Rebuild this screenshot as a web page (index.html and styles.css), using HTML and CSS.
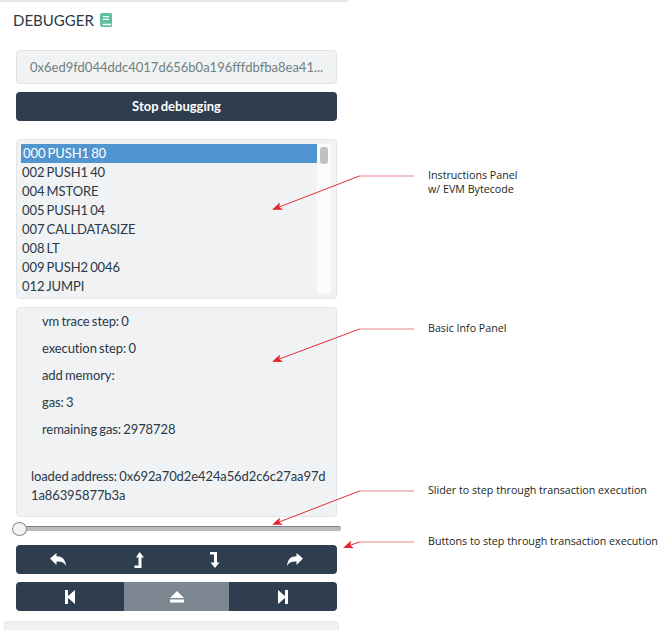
FILE: index.html
```html
<!DOCTYPE html>
<html lang="en">
<head>
<meta charset="utf-8">
<title>Debugger</title>
<link rel="stylesheet" href="styles.css">
</head>
<body>
<div class="page">
  <aside class="sidebar">
    <header class="title">
      <span>DEBUGGER</span>
      <svg class="book" viewBox="0 0 12 14" width="12" height="14"><path fill="#5dc0a1" d="M2 0h8.500a1.500 1.500 0 0 1 1.500 1.500v11a1.500 1.500 0 0 1-1.500 1.500h-8.500a2 2 0 0 1-2-2v-10a2 2 0 0 1 2-2z"/><path fill="#fff" d="M3 3h6v1.300h-6zM3 5.700h6v1.300h-6zM2.500 10.800h8.500v1.400h-8.500z"/></svg>
    </header>
    <div class="content">
      <div class="hash">0x6ed9fd044ddc4017d656b0a196fffdbfba8ea41...</div>
      <button class="stop">Stop debugging</button>
      <div class="panel list-panel">
        <div class="rows">
          <div class="row selected">000 PUSH1 80</div>
          <div class="row">002 PUSH1 40</div>
          <div class="row">004 MSTORE</div>
          <div class="row">005 PUSH1 04</div>
          <div class="row">007 CALLDATASIZE</div>
          <div class="row">008 LT</div>
          <div class="row">009 PUSH2 0046</div>
          <div class="row">012 JUMPI</div>
        </div>
        <div class="track"><div class="thumb"></div></div>
      </div>
      <div class="panel info-panel">
        <ul class="facts">
          <li>vm trace step: 0</li>
          <li>execution step: 0</li>
          <li>add memory:</li>
          <li>gas: 3</li>
          <li>remaining gas: 2978728</li>
        </ul>
        <p class="address">loaded address: 0x692a70d2e424a56d2c6c27aa97d1a86395877b3a</p>
      </div>
      <div class="slider"><div class="knob"></div></div>
      <div class="controls four">
        <button><svg viewBox="0 0 16 14" width="16" height="14"><path d="M0 5.500 6.500 0v3.200c5.500 0 9 3 9.500 9.800-1.700-3.400-4.500-4.800-9.500-4.500v3.500z"/></svg></button>
        <button><svg viewBox="0 0 10 16" width="10" height="16"><path d="M5.500 0 10 5.500h-2.500v10.500h-7v-2.500h4v-8h-2.500z"/></svg></button>
        <button><svg viewBox="0 0 10 16" width="10" height="16"><path d="M0 0h7v10.500h2.500l-4.500 5.500-4.500-5.500h3.500v-8h-4.500z"/></svg></button>
        <button><svg viewBox="0 0 16 14" width="16" height="14"><path d="M16 5.500 9.500 0v3.200c-5.500 0-9 3-9.500 9.800 1.700-3.400 4.500-4.800 9.500-4.500v3.500z"/></svg></button>
      </div>
      <div class="controls three">
        <button><svg viewBox="0 0 10 14" width="10" height="14"><path d="M0 0h3v6l7-6v14l-7-6v6h-3z"/></svg></button>
        <button class="active"><svg viewBox="0 0 14 12" width="14" height="12"><path d="M7 0l7 7h-14zM0 8.500h14v3h-14z"/></svg></button>
        <button><svg viewBox="0 0 10 14" width="10" height="14"><path d="M10 0h-3v6l-7-6v14l7-6v6h3z"/></svg></button>
      </div>
    </div>
    <div class="next-panel"></div>
  </aside>
  <svg class="arrows" viewBox="0 0 659 630" width="659" height="630">
    <defs>
      <marker id="head" markerWidth="10" markerHeight="8" refX="8" refY="4" orient="auto" markerUnits="userSpaceOnUse"><path d="M10 4 0 0 2.500 4 0 8z" fill="#e8202d"/></marker>
    </defs>
    <g class="lines">
      <path d="M359.500 176 274 209" marker-end="url(#head)"/>
      <path d="M359.500 329 274 361" marker-end="url(#head)"/>
      <path d="M359.500 491 274 524" marker-end="url(#head)"/>
      <path d="M359.500 542 345 547" marker-end="url(#head)"/>
    </g>
    <g class="stems">
      <path d="M359 176h55M359 329h55M359 491h55M359 542h55"/>
    </g>
  </svg>
  <p class="note n1">Instructions Panel<br>w/ EVM Bytecode</p>
  <p class="note n2">Basic Info Panel</p>
  <p class="note n3">Slider to step through transaction execution</p>
  <p class="note n4">Buttons to step through transaction execution</p>
</div>
</body>
</html>
```
FILE: styles.css
```css
* { box-sizing: border-box; }
html, body { margin: 0; padding: 0; background: #fff; }
body { font-family: Lato, "Liberation Sans", sans-serif; color: #2d3c4b; overflow: hidden; }
.page { position: relative; width: 659px; height: 630px; overflow: hidden; }
.sidebar { width: 348px; height: 630px; border-top: 2px solid #e4e6e8; display: flex; flex-direction: column; }
.sidebar > * { flex-shrink: 0; }
.title { display: flex; align-items: center; gap: 6px; height: 36px; padding-left: 13px; font-size: 15px; color: #2b3845; }
.content { padding: 12px 11px 0 16px; display: flex; flex-direction: column; }
.hash { height: 34px; line-height: 32px; background: #f0f2f4; border: 1px solid #dfe3e6; border-radius: 4px; padding-left: 13px; font-size: 13px; color: #6f8080; white-space: nowrap; }
.stop { height: 29px; margin-top: 8px; background: #2f3e4f; border: 0; border-radius: 4px; color: #fff; font: 700 13px Lato, sans-serif; word-spacing: -1px; padding: 0 0 2px; }
.panel { background: #f0f2f4; border: 1px solid #e2e6e9; border-radius: 4px; }
.list-panel { height: 160px; margin-top: 18px; padding: 4px 5px 4px 4px; display: flex; }
.rows { flex: 1; height: 150px; overflow: hidden; }
.row { height: 19px; line-height: 19px; font-size: 13px; letter-spacing: -0.100px; word-spacing: -1px; padding-left: 1px; color: #2b3845; white-space: nowrap; }
.row.selected { background: #5095cf; color: #fff; padding-left: 2px; }
.track { width: 14px; height: 150px; background: #fbfbfb; padding: 3px 2px 0 3px; }
.thumb { width: 8px; height: 17px; background: #bfc1c3; border-radius: 3px; }
.info-panel { height: 210px; margin-top: 8px; padding: 0 7px 0 14px; font-size: 13px; letter-spacing: -0.100px; word-spacing: -1px; color: #2b3845; }
.facts { list-style: none; margin: 0; padding: 0 0 0 11px; }
.facts li { height: 27px; line-height: 27px; }
.address { margin: 24px 0 0 0; line-height: 19px; word-break: break-all; }
.slider { position: relative; width: 326px; height: 5px; margin: 9px 0 0 -1px; background: #b9babb; border-top: 1px solid #7d7e80; border-radius: 3px; }
.knob { position: absolute; left: -3px; top: -5px; width: 15px; height: 14px; border-radius: 50%; background: #f4f4f4; border: 1px solid #8b8d8f; }
.controls { height: 29px; background: #2f3e4f; border-radius: 4px; overflow: hidden; }
.controls.four { margin-top: 14px; display: grid; grid-template-columns: 84px 78px 74px 85px; }
.controls.three { margin-top: 8px; display: grid; grid-template-columns: 108px 105px 108px; }
.controls button { border: 0; background: none; padding: 0; display: flex; align-items: center; justify-content: center; }
.controls svg { fill: #fff; display: block; }
.three button.active { background: #7c8791; }
.next-panel { height: 30px; margin: 10px 9px 0 4px; background: #f0f2f4; border: 1px solid #e2e6e9; border-radius: 4px; }
.arrows { position: absolute; left: 0; top: 0; pointer-events: none; }
.lines path { fill: none; stroke: #e0303a; stroke-width: 1; }
.stems path { fill: none; stroke: #ea8088; stroke-width: 1; }
.note { position: absolute; left: 428px; margin: 0; font: 10.700px/14px "Open Sans", sans-serif; color: #231f20; white-space: nowrap; }
.n1 { top: 168px; }
.n2 { top: 321px; }
.n3 { top: 483px; }
.n4 { top: 534px; }
```
